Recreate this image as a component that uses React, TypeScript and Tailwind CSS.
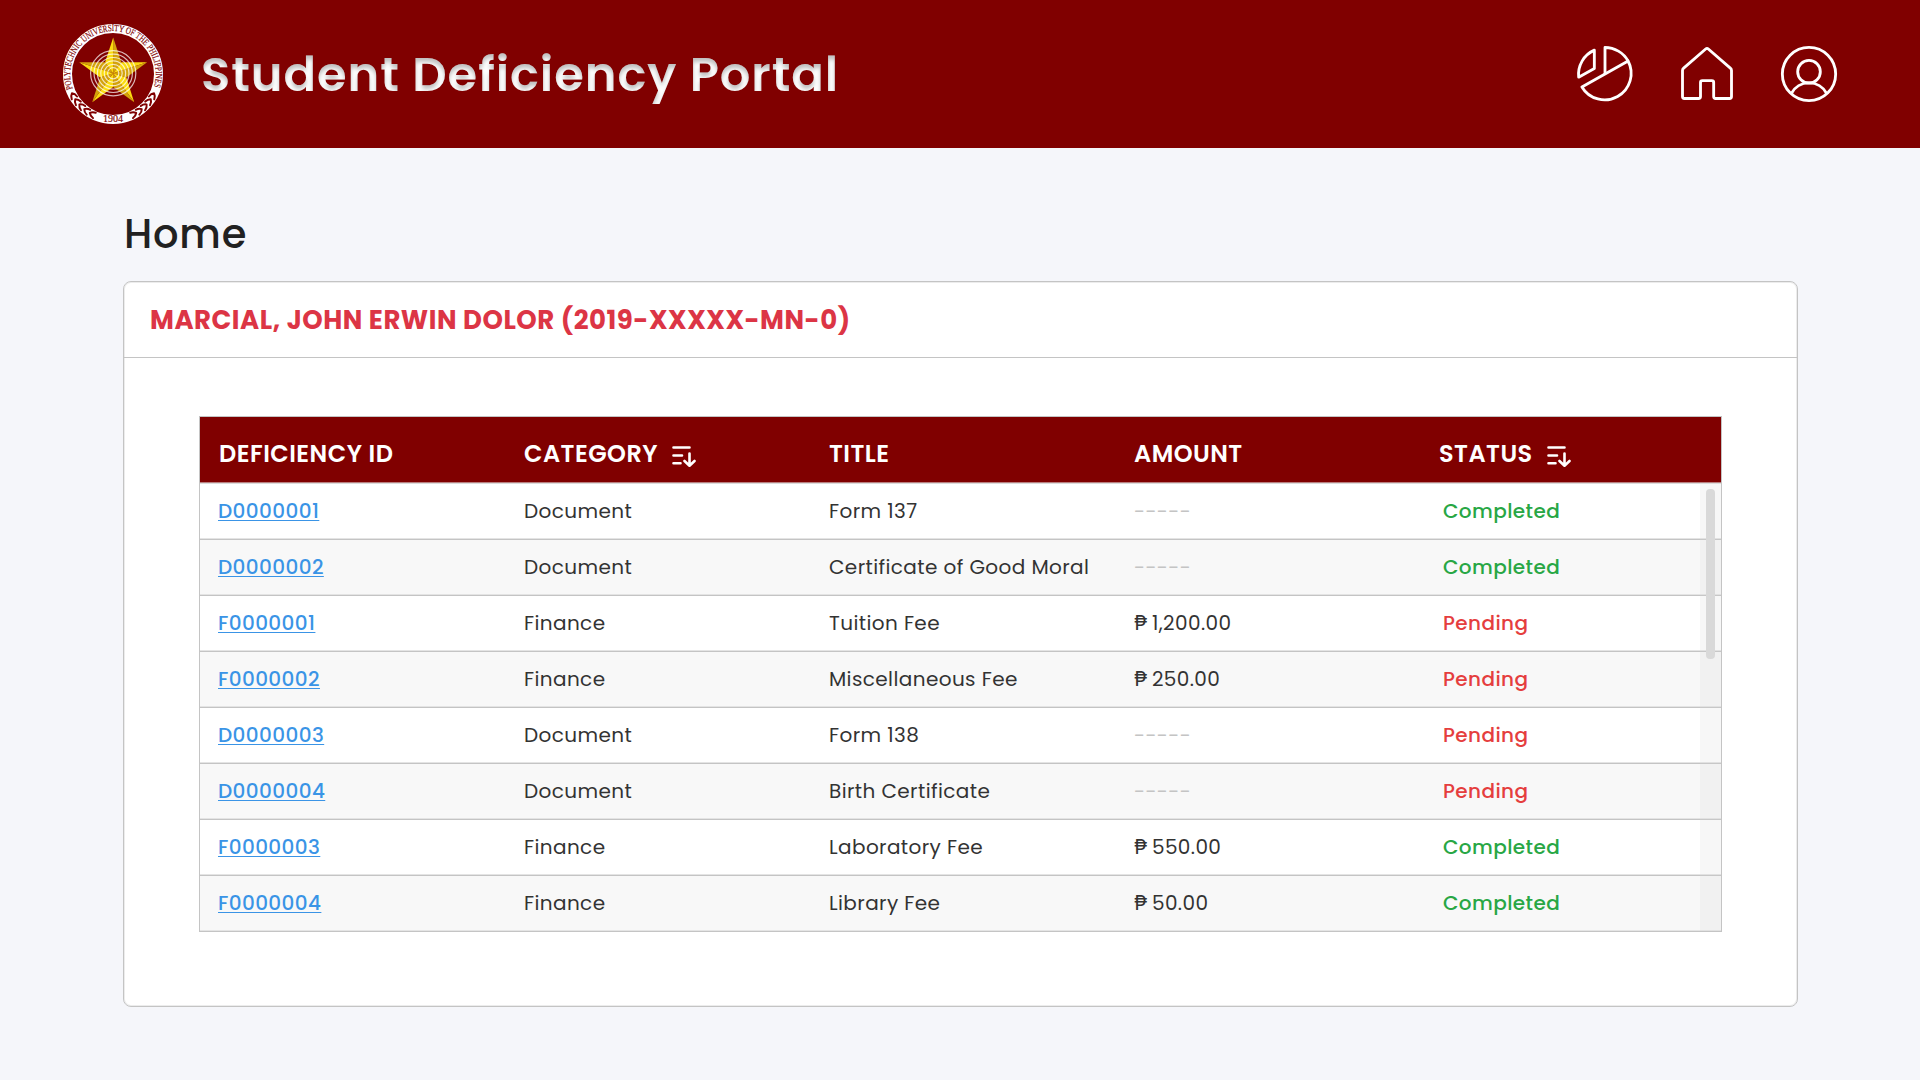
import React from "react";

type Deficiency = {
  id: string;
  category: "Document" | "Finance";
  title: string;
  amount?: string;
  status: "Completed" | "Pending";
};

const rows: Deficiency[] = [
  { id: "D0000001", category: "Document", title: "Form 137", status: "Completed" },
  { id: "D0000002", category: "Document", title: "Certificate of Good Moral", status: "Completed" },
  { id: "F0000001", category: "Finance", title: "Tuition Fee", amount: "₱ 1,200.00", status: "Pending" },
  { id: "F0000002", category: "Finance", title: "Miscellaneous Fee", amount: "₱ 250.00", status: "Pending" },
  { id: "D0000003", category: "Document", title: "Form 138", status: "Pending" },
  { id: "D0000004", category: "Document", title: "Birth Certificate", status: "Pending" },
  { id: "F0000003", category: "Finance", title: "Laboratory Fee", amount: "₱ 550.00", status: "Completed" },
  { id: "F0000004", category: "Finance", title: "Library Fee", amount: "₱ 50.00", status: "Completed" },
];

const columns = [
  { label: "DEFICIENCY ID", sortable: false },
  { label: "CATEGORY", sortable: true },
  { label: "TITLE", sortable: false },
  { label: "AMOUNT", sortable: false },
  { label: "STATUS", sortable: true },
];

const GRID = "grid grid-cols-[305px_305px_305px_305px_1fr] items-center";

function starPoints(cx: number, cy: number, outer: number, inner: number) {
  return Array.from({ length: 10 }, (_, i) => {
    const r = i % 2 === 0 ? outer : inner;
    const a = (-90 + i * 36) * (Math.PI / 180);
    return [cx + r * Math.cos(a), cy + r * Math.sin(a)] as const;
  });
}

function Laurel() {
  return (
    <g fill="none" stroke="#800000" strokeWidth="2" strokeLinecap="round" strokeLinejoin="round">
      {[118, 126.5, 135, 143.5, 152].map((deg) => {
        const a = (deg * Math.PI) / 180;
        const x = 50 + 45.3 * Math.cos(a);
        const y = 50 + 45.3 * Math.sin(a);
        return (
          <path
            key={deg}
            d="M3 -3 Q-0.5 -2.5 -2.2 0 Q-0.5 2.5 3 3"
            transform={`translate(${x} ${y}) rotate(${deg - 90})`}
          />
        );
      })}
    </g>
  );
}

function Seal() {
  const pts = starPoints(50.2, 49.3, 35.7, 13.8);
  return (
    <svg className="mb-px size-[100px] shrink-0 overflow-visible" viewBox="0 0 100 100">
      <defs>
        <path id="seal-arc" d="M9.8 64.6 A42.8 42.8 0 1 1 90.2 64.6" />
      </defs>
      <circle cx="50" cy="50" r="45.5" fill="none" stroke="#fff" strokeWidth="9" />
      {pts.map(([x, y], i) => {
        const [nx, ny] = pts[(i + 1) % 10];
        return <polygon key={i} points={`50.2,49.3 ${x},${y} ${nx},${ny}`} fill={i % 2 === 0 ? "#d4a30c" : "#fadb0f"} />;
      })}
      <g fill="none" stroke="#fff" strokeOpacity="0.72" strokeWidth="1.2">
        <circle cx="50.2" cy="49.3" r="22.6" />
        <circle cx="50.2" cy="49.3" r="19.2" />
        <circle cx="50.2" cy="49.3" r="15.8" />
        <circle cx="50.2" cy="49.3" r="12.4" />
        <circle cx="50.2" cy="49.3" r="9" />
        <circle cx="50.2" cy="49.3" r="5.6" />
      </g>
      <text className="font-['Liberation_Serif',serif]" fontSize="9.4" fill="#800000" stroke="#800000" strokeWidth="0.15">
        <textPath href="#seal-arc" textLength="162" lengthAdjust="spacingAndGlyphs">
          POLYTECHNIC UNIVERSITY OF THE PHILIPPINES
        </textPath>
      </text>
      <text
        className="font-['Liberation_Serif',serif]"
        x="50"
        y="98"
        textAnchor="middle"
        fontSize="10"
        fill="#800000"
        stroke="#800000"
        strokeWidth="0.15"
      >
        1904
      </text>
      <Laurel />
      <g transform="translate(100 0) scale(-1 1)">
        <Laurel />
      </g>
    </svg>
  );
}

function ChartIcon() {
  return (
    <svg className="size-[60px]" viewBox="75 41.5 180 180" fill="none" stroke="#fff" strokeWidth="8.5" strokeLinejoin="round">
      <path d="M95.7 170.4 L234.3 92.6 A79.5 79.5 0 0 1 95.7 170.4 Z" />
      <path d="M165 131.5 V52 A79.5 79.5 0 0 1 234.3 92.6" />
      <path d="M133 60 A79.5 79.5 0 0 0 86 141 L133 115 Z" />
    </svg>
  );
}

function HomeIcon() {
  return (
    <svg className="size-[60px]" viewBox="381 41.5 180 180" fill="none" stroke="#fff" strokeWidth="8.5" strokeLinejoin="round">
      <path d="M467 56.5 Q471 53 475 56.5 L541 114 Q544.5 117 544.5 121 V199 Q544.5 205 538.5 205 H497 Q491 205 491 199 V157 Q491 151.5 485.5 151.5 H457 Q451.5 151.5 451.5 157 V199 Q451.5 205 445.5 205 H403 Q397.5 205 397.5 199 V121 Q397.5 117 401 114 Z" />
    </svg>
  );
}

function UserIcon() {
  return (
    <svg className="size-[60px]" viewBox="687 41.5 180 180" fill="none" stroke="#fff" strokeWidth="8.5">
      <circle cx="777" cy="131.5" r="80" />
      <circle cx="777" cy="124.5" r="34" />
      <path d="M724 190 A60 60 0 0 1 830 190" />
    </svg>
  );
}

function SortIcon() {
  return (
    <svg
      className="mt-[6px] size-6 shrink-0"
      viewBox="0 0 24 24"
      fill="none"
      stroke="#fff"
      strokeWidth="2.6"
      strokeLinecap="round"
      strokeLinejoin="round"
    >
      <path d="M1.5 2.5 H17.5 M1.5 10.5 H10 M1.5 18.3 H8.5" />
      <path d="M17.5 8.5 V20.5 M12.5 16 L17.5 20.7 L22.5 16" />
    </svg>
  );
}

export default function App() {
  return (
    <div className="h-[1080px] w-[1920px] overflow-hidden bg-[#f5f6fa] font-['Poppins','Inter',sans-serif]">
      <svg className="absolute size-0">
        <filter id="text-inset" x="0" y="0" width="100%" height="100%" colorInterpolationFilters="sRGB">
          <feOffset in="SourceAlpha" dy="4" result="shifted" />
          <feGaussianBlur in="shifted" stdDeviation="2" result="blurred" />
          <feComposite in="SourceAlpha" in2="blurred" operator="out" result="edge" />
          <feColorMatrix in="edge" values="0 0 0 0 0  0 0 0 0 0  0 0 0 0 0  0 0 0 0.25 0" result="shade" />
          <feMerge>
            <feMergeNode in="SourceGraphic" />
            <feMergeNode in="shade" />
          </feMerge>
        </filter>
      </svg>

      <header className="flex h-[148px] items-center bg-[#800000] pr-[81px] pl-[63px]">
        <Seal />
        <h1 className="ml-[38px] pt-[2px] text-[48px] leading-[72px] font-semibold tracking-[0.02em] whitespace-nowrap text-white [filter:url(#text-inset)]">
          Student Deficiency Portal
        </h1>
        <nav className="ml-auto flex gap-[42px]">
          <ChartIcon />
          <HomeIcon />
          <UserIcon />
        </nav>
      </header>

      <main className="pt-[56px] pr-[122px] pl-[123px]">
        <h2 className="pl-px text-[40px] leading-[60px] font-medium tracking-[0.02em] text-[#212121]">Home</h2>

        <section className="mt-[17px] flex h-[726px] flex-col rounded-lg border border-[#c4c4c4] bg-white shadow-[inset_0_0_0_1px_#ececec]">
          <div className="h-[76px] border-b border-[#c4c4c4] pl-[26px] text-[26px] leading-[76px] font-bold tracking-[0.02em] text-[#dc3545]">
            MARCIAL, JOHN ERWIN DOLOR (2019-XXXXX-MN-0)
          </div>

          <div className="relative mt-[58px] ml-[75px] flex w-[1523px] flex-col border border-b-0 border-[#c4c4c4]">
            <div
              className={`${GRID} h-[66px] border-b border-[#b98080] bg-[#800000] pl-[19px] text-[24px] leading-9 font-semibold tracking-[0.02em] text-white`}
            >
              {columns.map((c) => (
                <div key={c.label} className="flex items-center gap-[14px] pt-[8px]">
                  {c.label}
                  {c.sortable && <SortIcon />}
                </div>
              ))}
            </div>
            <div className="border-t border-[#dcdcdc]">
              {rows.map((r) => (
                <div
                  key={r.id}
                  className={`${GRID} h-14 border-b border-[#c4c4c4] pb-[2px] pl-[18px] text-[20px] leading-[30px] tracking-[0.02em] text-[#333333] shadow-[inset_0_-1px_0_#e4e4e4] odd:bg-white even:bg-[#f8f8f8]`}
                >
                  <a className="justify-self-start font-medium text-[#3a94e6] underline decoration-1 underline-offset-[2px]">{r.id}</a>
                  <span className="pl-px">{r.category}</span>
                  <span className="pl-px">{r.title}</span>
                  <span className={r.amount ? "pl-px [word-spacing:-1.5px]" : "pl-px text-[#c4c4c4]"}>{r.amount ?? "-----"}</span>
                  <span className={r.status === "Completed" ? "pl-[5px] font-medium text-[#28a745]" : "pl-[5px] font-medium text-[#e53e3e]"}>
                    {r.status}
                  </span>
                </div>
              ))}
            </div>
            <div className="absolute top-[67px] right-0 bottom-px w-[21px] bg-[#d9d9d9]/20">
              <div className="mt-[5px] ml-[6px] h-[170px] w-[9px] rounded bg-[#d9d9d9]" />
            </div>
          </div>
        </section>
      </main>
    </div>
  );
}
